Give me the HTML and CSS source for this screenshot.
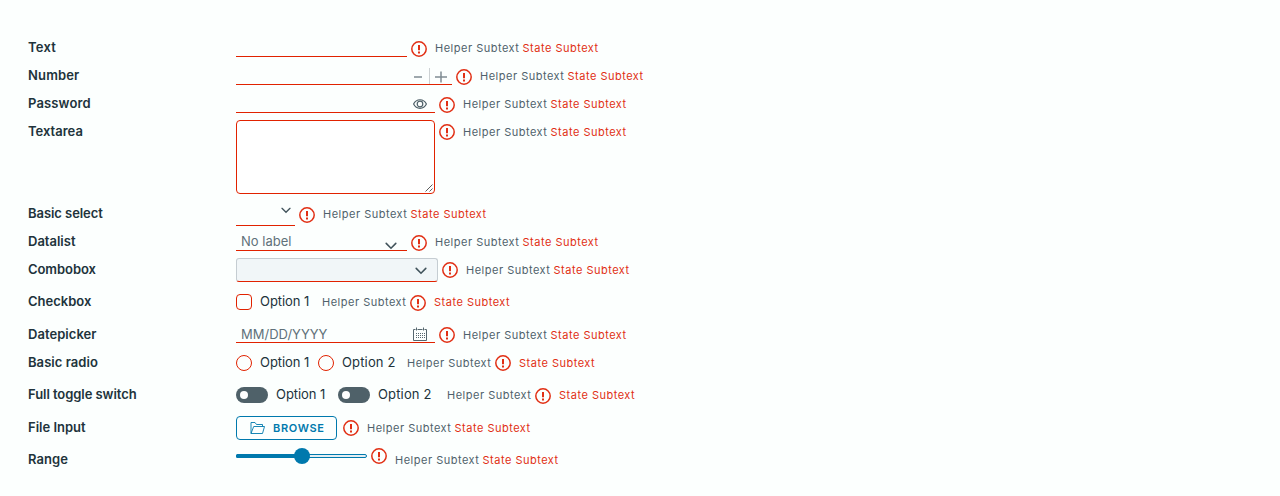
FILE: index.html
```
<!DOCTYPE html>
<html lang="en">
<head>
<meta charset="utf-8">
<title>Form controls</title>
<link rel="stylesheet" href="styles.css">
</head>
<body>
<svg class="symbols" aria-hidden="true">
  <symbol id="error" viewBox="0 0 16 16"><circle cx="8" cy="8" r="7.2" fill="none" stroke="currentColor" stroke-width="1.5"/><path d="M8 4v5.2M8 10.4v2" fill="none" stroke="currentColor" stroke-width="2"/></symbol>
  <symbol id="chevron" viewBox="0 0 12 8"><path d="M1.2 1.4 6 6.2l4.8-4.8" fill="none" stroke="currentColor" stroke-width="1.6" stroke-linecap="round"/></symbol>
</svg>
<form class="form">
  <div class="row"><label class="label l-text">Text</label><div class="input w-text"></div><svg class="error"><use href="#error"/></svg><span class="helper">Helper Subtext</span><span class="state">State Subtext</span></div>
  <div class="row"><label class="label l-number">Number</label><div class="input w-number"><svg class="stepper" viewBox="0 0 46 20"><path d="M8 13h8M29 13h12M35 7.5v11" stroke="#7f8c92" stroke-width="1.5"/><path d="M23.5 4v16" stroke="#ccd1d3"/></svg></div><svg class="error"><use href="#error"/></svg><span class="helper">Helper Subtext</span><span class="state">State Subtext</span></div>
  <div class="row"><label class="label l-password">Password</label><div class="input w-wide"><svg class="eye" viewBox="0 0 14 10" fill="none" stroke="#4f6169" stroke-width="1.2"><path d="M.6 5C3.4-.7 10.6-.7 13.4 5 10.6 10.7 3.4 10.7.6 5Z"/><circle cx="7" cy="5" r="2.8"/></svg></div><svg class="error"><use href="#error"/></svg><span class="helper">Helper Subtext</span><span class="state">State Subtext</span></div>
  <div class="row h-area"><label class="label l-textarea">Textarea</label><div class="textarea"><svg class="grip" viewBox="0 0 8 8"><path d="M.5 7.5l7-7M4.5 7.5l3-3" stroke="#4a4a4a" stroke-width=".9"/></svg></div><svg class="error up"><use href="#error"/></svg><span class="helper">Helper Subtext</span><span class="state">State Subtext</span></div>
  <div class="row"><label class="label l-select">Basic select</label><div class="input select"><svg class="chevron small"><use href="#chevron"/></svg></div><svg class="error"><use href="#error"/></svg><span class="helper">Helper Subtext</span><span class="state">State Subtext</span></div>
  <div class="row"><label class="label l-datalist">Datalist</label><div class="input w-text"><span class="placeholder p-list">No label</span><svg class="chevron list"><use href="#chevron"/></svg></div><svg class="error"><use href="#error"/></svg><span class="helper">Helper Subtext</span><span class="state">State Subtext</span></div>
  <div class="row h-32"><label class="label l-combobox">Combobox</label><div class="combobox"><svg class="chevron"><use href="#chevron"/></svg></div><svg class="error up"><use href="#error"/></svg><span class="helper">Helper Subtext</span><span class="state">State Subtext</span></div>
  <div class="row h-33"><label class="label l-checkbox">Checkbox</label><span class="check"></span><span class="option">Option 1</span><span class="helper first gap-4">Helper Subtext</span><svg class="error inline"><use href="#error"/></svg><span class="state">State Subtext</span></div>
  <div class="row"><label class="label l-date">Datepicker</label><div class="input w-wide"><span class="placeholder p-date">MM/DD/YYYY</span><svg class="calendar" viewBox="0 0 14 14" fill="none" stroke="#56676f"><path d="M2.5 2.5h-2v11h13v-11h-2M4.5 2.5h5M3.5.5v3M10.5.5v3"/><path d="M3 6.5h9M3 8.5h9M3 10.5h9" stroke-dasharray="1 1"/></svg></div><svg class="error up"><use href="#error"/></svg><span class="helper">Helper Subtext</span><span class="state">State Subtext</span></div>
  <div class="row h-32"><label class="label l-radio">Basic radio</label><span class="check round"></span><span class="option">Option 1</span><span class="check round"></span><span class="option two">Option 2</span><span class="helper first gap-3">Helper Subtext</span><svg class="error inline up"><use href="#error"/></svg><span class="state">State Subtext</span></div>
  <div class="row h-33"><label class="label l-toggle">Full toggle switch</label><span class="toggle"></span><span class="option wide">Option 1</span><span class="toggle"></span><span class="option two">Option 2</span><span class="helper first gap-7">Helper Subtext</span><svg class="error inline"><use href="#error"/></svg><span class="state">State Subtext</span></div>
  <div class="row h-32"><label class="label l-file">File Input</label><button class="browse" type="button"><svg class="folder" viewBox="0 0 15 12" fill="none" stroke="#0079ad" stroke-width=".9"><path d="M1 11.5V.5h4l1.5 2h6v2M1 11.5l2.7-7h10.8l-2 7H1Z" stroke-linejoin="round"/></svg><span class="browse-text">BROWSE</span></button><svg class="error up file"><use href="#error"/></svg><span class="helper">Helper Subtext</span><span class="state">State Subtext</span></div>
  <div class="row"><label class="label l-range">Range</label><svg class="range" viewBox="0 0 131 16"><rect x=".5" y="6.5" width="130" height="3" rx="1.5" fill="#e5eef2" stroke="#0079ad"/><rect y="6" width="66" height="4" rx="1.5" fill="#0079ad"/><circle cx="66" cy="8" r="8" fill="#0079ad"/></svg><svg class="error top"><use href="#error"/></svg><span class="helper">Helper Subtext</span><span class="state">State Subtext</span></div>
</form>
</body>
</html>
```
FILE: styles.css
```
* { box-sizing: border-box; }
body { margin: 0; background: #fcfffe; font-family: Inter, "Open Sans", sans-serif; color: #21333b; }
.symbols { display: none; }
.form { padding: 36px 28px 0; }
.row { display: flex; align-items: flex-start; height: 28px; line-height: 24px; white-space: nowrap; }
.row > * { flex: none; }
.h-area { height: 82px; }
.h-32 { height: 32px; }
.h-33 { height: 33px; }
.label { width: 208px; font-size: 13px; font-weight: 600; line-height: 23px; }
.l-text { letter-spacing: .25px; }
.l-number, .l-password { letter-spacing: .15px; }
.l-select, .l-combobox, .l-toggle { letter-spacing: -.06px; }
.l-date, .l-range, .l-radio { letter-spacing: .05px; }
.input { display: flex; justify-content: flex-end; height: 21px; border-bottom: 1px solid #e12200; }
.h-33 + .row .input { height: 20px; }
.w-text { width: 171px; }
.w-number { width: 216px; }
.w-wide { width: 199px; }
.select { width: 59px; height: 24px; }
.stepper { width: 46px; height: 20px; }
.eye { width: 14px; height: 10px; margin: 7px 8px 0 0; }
.calendar { width: 14px; height: 14px; margin: 4px 8px 0 0; }
.textarea { display: flex; justify-content: flex-end; align-items: flex-end; width: 199px; height: 74px; padding: 1px; border: 1px solid #e12200; border-radius: 4px; background: #fff; }
.grip { width: 8px; height: 8px; }
.chevron { width: 12px; height: 8px; color: #42545c; }
.chevron.small { width: 10px; height: 7px; margin: 5px 4px 0 0; }
.chevron.list { margin: 12px 10px 0 0; }
.combobox { display: flex; justify-content: flex-end; width: 202px; height: 24px; padding: 8px 10px 0 0; border: 1px solid #c5cdd2; border-bottom-color: #e12200; border-radius: 3px; background: #f1f6f8; }
.placeholder { flex: 1; padding-left: 5px; font-size: 13px; line-height: 23px; color: #60717a; }
.error { width: 16px; height: 16px; margin: 5px 0 0 4px; color: #e12f14; }
.error.up { margin-top: 4px; }
.error.top { margin-top: 0; }
.error.inline { margin-left: 0; }
.error.file { margin-left: 6px; }
.helper, .state { font-size: 11px; letter-spacing: .5px; }
.helper { width: 87.5px; margin-left: 8px; color: #4f616b; }
.helper.first { width: 88px; }
.error + .state { margin-left: 8px; }
.state { color: #e12f14; }
.helper.gap-3 { margin-left: 3px; }
.helper.gap-4 { margin-left: 4px; }
.helper.gap-7 { margin-left: 7px; }
.check { width: 16px; height: 16px; margin: 4px 8px 0 0; border: 1px solid #e12200; border-radius: 4px; }
.check.round { border-radius: 50%; }
.option { width: 58px; font-size: 13px; line-height: 23px; letter-spacing: -.05px; }
.option.two { width: 62px; letter-spacing: .15px; }
.option.wide { width: 62px; }
.toggle { width: 32px; height: 16px; margin: 4px 8px 0 0; padding: 4px; border-radius: 8px; background: #4f6169; }
.toggle::before { content: ""; display: block; width: 8px; height: 8px; border-radius: 50%; background: #fff; }
.browse { display: flex; align-items: center; gap: 8px; width: 101px; height: 24px; padding: 0 0 0 13px; border: 1px solid #0079ad; border-radius: 4px; background: transparent; color: #0079ad; font: 600 11px Inter, sans-serif; letter-spacing: .65px; }
.folder { width: 15px; height: 12px; }
.range { width: 131px; height: 16px; }
```
